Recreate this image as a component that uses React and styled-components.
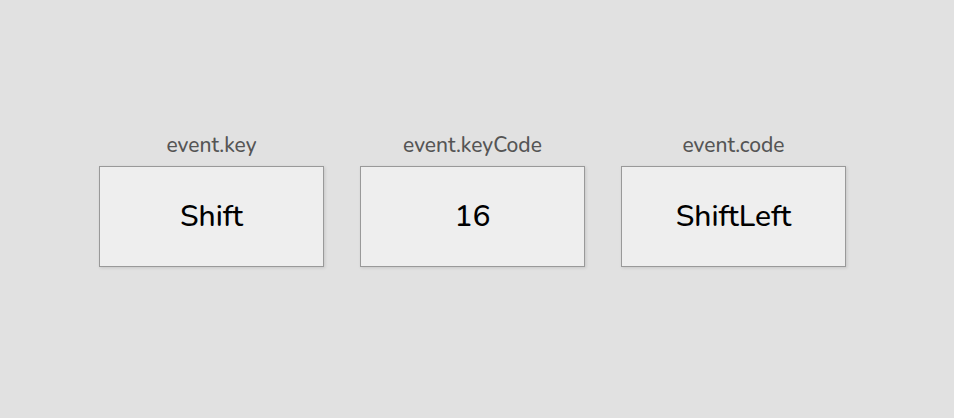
import styled, { createGlobalStyle } from 'styled-components';

const GlobalStyle = createGlobalStyle`
    html, body {
        margin: 0;
        padding: 0;
        background-color: #e1e1e1;
        font-family: "Nunito", "Lato", "Noto Sans", sans-serif;
    }
`;

const Page = styled.div`
    width: 100%;
    height: 418px;
    display: flex;
    justify-content: center;
    align-items: flex-start;
    gap: 36px;
    padding: 133px 9px 0 0;
    box-sizing: border-box;
`;

const Column = styled.div`
    display: flex;
    flex-direction: column;
    align-items: center;
`;

const Label = styled.div`
    font-size: 21px;
    font-weight: 500;
    line-height: 25px;
    color: #555;
    margin-bottom: 8px;
`;

const KeyBox = styled.div`
    width: 225px;
    height: 101px;
    box-sizing: border-box;
    display: flex;
    align-items: center;
    justify-content: center;
    background-color: #eee;
    border: 1px solid #999;
    box-shadow: 1px 1px 3px rgba(0, 0, 0, 0.12);
    font-size: 30px;
    font-weight: 500;
    color: #000;
`;

const items = [
    { label: 'event.key', value: 'Shift' },
    { label: 'event.keyCode', value: '16' },
    { label: 'event.code', value: 'ShiftLeft' },
];

const App = () => {
    return (
        <>
            <GlobalStyle />
            <Page>
                {items.map((item) => (
                    <Column key={item.label}>
                        <Label>{item.label}</Label>
                        <KeyBox>{item.value}</KeyBox>
                    </Column>
                ))}
            </Page>
        </>
    );
};

export default App;
